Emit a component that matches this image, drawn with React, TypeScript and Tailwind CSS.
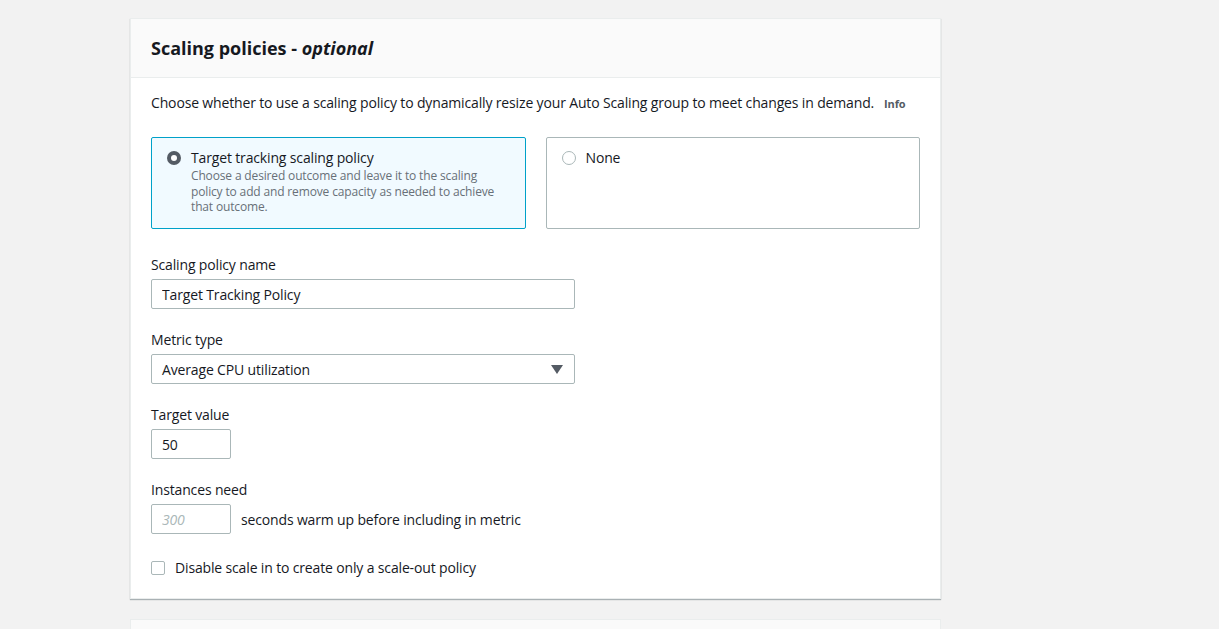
import { useState } from "react";

export default function App() {
  const [policy, setPolicy] = useState("target");
  const [name, setName] = useState("Target Tracking Policy");
  const [target, setTarget] = useState("50");
  const [warmup, setWarmup] = useState("");
  const [disableIn, setDisableIn] = useState(false);

  return (
    <div
      className="min-h-[629px] bg-[#f2f2f2] pt-[18px] pl-[130px] text-[#16191f] tracking-[-0.15px]"
      style={{ fontFamily: '"Open Sans", "Noto Sans", sans-serif' }}
    >
      {/* Card */}
      <div className="w-[811px] bg-white border border-[#eaeded] shadow-[0_1px_1px_0_rgba(0,28,36,0.3)]">
        <div className="h-[59px] bg-[#fafafa] border-b border-[#eaeded] px-5 flex items-center">
          <h2 className="text-[18px] font-bold leading-none tracking-normal">
            Scaling policies - <em>optional</em>
          </h2>
        </div>

        <div className="px-5 pt-[15px] pb-[20px]">
          <p className="text-[14px] leading-[20px] whitespace-nowrap">
            Choose whether to use a scaling policy to dynamically resize your Auto Scaling group to meet changes in demand.
            <span className="ml-[10px] text-[11px] font-bold text-[#545b64]">Info</span>
          </p>

          {/* Tiles */}
          <div className="mt-[23px] flex gap-[20px]">
            <button
              onClick={() => setPolicy("target")}
              className={`w-[375px] h-[92px] rounded-[2px] border text-left flex items-start gap-[10px] px-[15px] pt-[10px] ${
                policy === "target" ? "bg-[#f1faff] border-[#00a1c9]" : "bg-white border-[#aab7b8]"
              }`}
            >
              <Radio on={policy === "target"} />
              <div>
                <div className="text-[14px] leading-[20px]">Target tracking scaling policy</div>
                <div className="text-[12px] leading-[15.5px] text-[#687078] w-[308px]">
                  Choose a desired outcome and leave it to the scaling policy to add and remove capacity as needed to achieve that outcome.
                </div>
              </div>
            </button>
            <button
              onClick={() => setPolicy("none")}
              className={`w-[375px] h-[92px] rounded-[2px] border text-left flex items-start gap-[10px] px-[15px] pt-[10px] ${
                policy === "none" ? "bg-[#f1faff] border-[#00a1c9]" : "bg-white border-[#aab7b8]"
              }`}
            >
              <Radio on={policy === "none"} />
              <div className="text-[14px] leading-[20px]">None</div>
            </button>
          </div>

          {/* Fields */}
          <div className="mt-[26px] flex flex-col gap-[21px]">
            <Field label="Scaling policy name">
              <input
                value={name}
                onChange={(e) => setName(e.target.value)}
                className="w-[424px] h-[30px] border border-[#aab7b8] rounded-[2px] px-[10px] text-[14px] outline-none"
              />
            </Field>

            <Field label="Metric type">
              <div className="w-[424px] h-[30px] border border-[#aab7b8] rounded-[2px] px-[10px] text-[14px] flex items-center justify-between">
                <span>Average CPU utilization</span>
                <svg width="12" height="9" viewBox="0 0 12 9" className="mr-[1px]">
                  <path d="M0 0h12L6 9z" fill="#545b64" />
                </svg>
              </div>
            </Field>

            <Field label="Target value">
              <input
                value={target}
                onChange={(e) => setTarget(e.target.value)}
                className="w-[80px] h-[30px] border border-[#aab7b8] rounded-[2px] px-[10px] text-[14px] outline-none"
              />
            </Field>

            <Field label="Instances need">
              <div className="flex items-center gap-[10px]">
                <input
                  value={warmup}
                  placeholder="300"
                  onChange={(e) => setWarmup(e.target.value)}
                  className="w-[80px] h-[30px] border border-[#aab7b8] rounded-[2px] px-[10px] text-[14px] outline-none placeholder:italic placeholder:text-[#aab7b8]"
                />
                <span className="text-[14px]">seconds warm up before including in metric</span>
              </div>
            </Field>
          </div>

          <label className="mt-[24px] flex items-center gap-[10px] text-[14px] leading-[20px] cursor-pointer">
            <span
              onClick={() => setDisableIn(!disableIn)}
              className={`w-[14px] h-[14px] border rounded-[2px] ${disableIn ? "bg-[#0073bb] border-[#0073bb]" : "bg-white border-[#aab7b8]"}`}
            />
            <span onClick={() => setDisableIn(!disableIn)}>Disable scale in to create only a scale-out policy</span>
          </label>
        </div>
      </div>

      {/* next card peeking */}
      <div className="mt-[20px] w-[811px] h-[20px] bg-[#fafafa] border border-[#eaeded]" />
    </div>
  );
}

function Radio({ on }: { on: boolean }) {
  return (
    <span
      className={`mt-[3px] shrink-0 w-[14px] h-[14px] rounded-full flex items-center justify-center ${
        on ? "bg-[#545b64]" : "border border-[#aab7b8] bg-white"
      }`}
    >
      {on && <span className="w-[6px] h-[6px] rounded-full bg-white" />}
    </span>
  );
}

function Field({ label, children }: { label: string; children: React.ReactNode }) {
  return (
    <div>
      <div className="text-[14px] leading-[20px] mb-[4px]">{label}</div>
      {children}
    </div>
  );
}
